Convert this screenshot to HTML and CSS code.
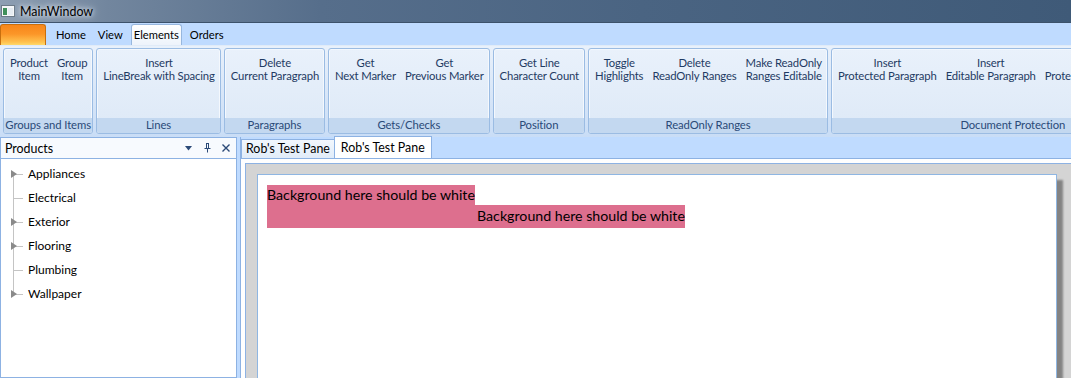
FILE: index.html
```html
<!DOCTYPE html>
<html lang="en">
<head>
  <meta charset="UTF-8">
  <title>MainWindow</title>
  <link rel="stylesheet" href="styles.css">
</head>
<body>
  <div class="window">
    <!-- Title bar -->
    <div class="titlebar">
      <svg class="app-icon" width="14" height="12" viewBox="0 0 14 12">
        <rect x="0.5" y="0.5" width="13" height="11" fill="#f4f6f8" stroke="#6c7a88"/>
        <rect x="2" y="3" width="4" height="7" fill="#3f8f5a"/>
        <rect x="7" y="3" width="5" height="7" fill="#e6ecf2"/>
      </svg>
      <span class="title">MainWindow</span>
    </div>

    <!-- Ribbon -->
    <div class="ribbon-tabs">
      <div class="app-button"></div>
      <div class="rtab">Home</div>
      <div class="rtab">View</div>
      <div class="rtab active">Elements</div>
      <div class="rtab">Orders</div>
    </div>
    <div class="ribbon-body">
      <div class="group">
        <div class="group-buttons">
          <div class="rbtn">Product<br>Item</div>
          <div class="rbtn">Group<br>Item</div>
        </div>
        <div class="group-label">Groups and Items</div>
      </div>
      <div class="group">
        <div class="group-buttons">
          <div class="rbtn">Insert<br>LineBreak with Spacing</div>
        </div>
        <div class="group-label">Lines</div>
      </div>
      <div class="group">
        <div class="group-buttons">
          <div class="rbtn">Delete<br>Current Paragraph</div>
        </div>
        <div class="group-label">Paragraphs</div>
      </div>
      <div class="group">
        <div class="group-buttons">
          <div class="rbtn">Get<br>Next Marker</div>
          <div class="rbtn">Get<br>Previous Marker</div>
        </div>
        <div class="group-label">Gets/Checks</div>
      </div>
      <div class="group">
        <div class="group-buttons">
          <div class="rbtn">Get Line<br>Character Count</div>
        </div>
        <div class="group-label">Position</div>
      </div>
      <div class="group">
        <div class="group-buttons">
          <div class="rbtn">Toggle<br>Highlights</div>
          <div class="rbtn">Delete<br>ReadOnly Ranges</div>
          <div class="rbtn">Make ReadOnly<br>Ranges Editable</div>
        </div>
        <div class="group-label">ReadOnly Ranges</div>
      </div>
      <div class="group">
        <div class="group-buttons">
          <div class="rbtn">Insert<br>Protected Paragraph</div>
          <div class="rbtn">Insert<br>Editable Paragraph</div>
          <div class="rbtn">Get<br>Protected Ranges</div>
          <div class="rbtn">Clear<br>Protection</div>
        </div>
        <div class="group-label">Document Protection</div>
      </div>
    </div>

    <!-- Dock area -->
    <div class="dock">
      <div class="pane">
        <div class="pane-header">
          <span class="pane-title">Products</span>
          <svg class="pane-icon" width="8" height="5" viewBox="0 0 8 5"><path d="M0 0h7L3.5 4.5z" fill="#2b4a78"/></svg>
          <svg class="pane-icon" width="7" height="10" viewBox="0 0 7 10"><path d="M2 0.5h3M2.5 0.5v5M4.5 0.5v5M0.5 5.5h6M3.5 5.5v4" stroke="#2b4a78" fill="none"/></svg>
          <svg class="pane-icon" width="8" height="8" viewBox="0 0 8 8"><path d="M0.5 0.5l7 7M7.5 0.5l-7 7" stroke="#2b4a78" stroke-width="1.4"/></svg>
        </div>
        <ul class="tree">
          <li class="has-children"><span class="expander"></span>Appliances</li>
          <li><span class="expander"></span>Electrical</li>
          <li class="has-children"><span class="expander"></span>Exterior</li>
          <li class="has-children"><span class="expander"></span>Flooring</li>
          <li><span class="expander"></span>Plumbing</li>
          <li class="has-children"><span class="expander"></span>Wallpaper</li>
        </ul>
      </div>
      <div class="splitter"></div>
      <div class="documents">
        <div class="doc-tabs">
          <div class="doc-tab">Rob's Test Pane</div>
          <div class="doc-tab active">Rob's Test Pane</div>
        </div>
        <div class="doc-body">
          <div class="viewer">
            <div class="page">
              <div class="highlight">
                <div class="hl-line first">Background here should be white</div>
                <div class="hl-line second">Background here should be white</div>
              </div>
            </div>
          </div>
        </div>
      </div>
    </div>
  </div>
</body>
</html>
```

FILE: styles.css
```css
body {
  margin: 0;
  font-family: Lato, "Noto Sans", sans-serif;
  font-size: 12px;
  overflow: hidden;
}
.window {
  width: 1071px;
  height: 378px;
  background-color: #bfdbff;
  overflow: hidden;
}

/* title bar */
.titlebar {
  height: 23px;
  display: flex;
  align-items: center;
  padding-left: 1px;
  background: linear-gradient(90deg, #8e9fb3 0, #72869e 10%, #566e8b 30%, #4a6482 60%, #3f5a78 100%);
  border-bottom: 1px solid #3c526b;
  box-sizing: border-box;
}
.app-icon {
  margin-right: 5px;
}
.title {
  font-size: 12.4px;
  color: #000;
  text-shadow: 0 0 8px #e8eef5, 0 0 4px #e8eef5;
}

/* ribbon tabs */
.ribbon-tabs {
  height: 22px;
  display: flex;
  align-items: flex-end;
  background-color: #bfdbff;
  font-size: 11.2px;
}
.app-button {
  width: 44px;
  height: 20px;
  margin-right: 5px;
  border: 1px solid #c86f0e;
  border-bottom: none;
  border-radius: 3px 3px 0 0;
  background: linear-gradient(#f7861a 0, #fb9628 45%, #ffc14e 85%, #ffd96a 100%);
}
.rtab {
  height: 20px;
  line-height: 20px;
  padding: 0 5px;
  margin-right: 2px;
  color: #000;
}
.rtab.active {
  padding: 0 2px;
  margin: 0 3px 0 1px;
  border: 1px solid #97b7de;
  border-bottom: none;
  border-radius: 3px 3px 0 0;
  background: linear-gradient(#ffffff, #edf3fb);
}

/* ribbon body */
.ribbon-body {
  height: 92px;
  box-sizing: border-box;
  padding: 2px 0 0 3px;
  display: flex;
  gap: 3px;
  background: linear-gradient(#e9f1fb, #c9ddf6);
  border-top: 1px solid #e0ebf8;
}
.group {
  flex-shrink: 0;
  height: 86px;
  display: flex;
  flex-direction: column;
  border: 1px solid #9bbce3;
  border-radius: 3px;
  background: linear-gradient(#e9f1fb, #dde9f7);
  box-shadow: inset 0 0 0 1px #f4f8fd;
  box-sizing: border-box;
}
.group-buttons {
  flex: 1;
  display: flex;
  gap: 9px;
  padding: 8px 5px 0 6px;
}
.rbtn {
  text-align: center;
  font-size: 11.3px;
  letter-spacing: -0.15px;
  line-height: 12.5px;
  color: #1f3b63;
  white-space: nowrap;
}
.group-label {
  height: 15px;
  line-height: 14px;
  font-size: 11.3px;
  letter-spacing: -0.1px;
  text-align: center;
  color: #2a4a78;
  background-color: #c3d8f0;
  border-radius: 0 0 2px 2px;
}

/* dock area */
.dock {
  display: flex;
  height: 241px;
}
.pane {
  width: 237px;
  flex-shrink: 0;
  border: 1px solid #8db2e3;
  box-sizing: border-box;
  background-color: #fff;
}
.pane-header {
  height: 21px;
  display: flex;
  align-items: center;
  padding: 0 6px 0 4px;
  border-bottom: 1px solid #8db2e3;
  background-color: #f7fafe;
  box-sizing: border-box;
  font-size: 12.4px;
}
.pane-title {
  flex: 1;
  color: #000;
}
.pane-icon {
  margin-left: 11px;
}
.tree {
  position: relative;
  list-style: none;
  margin: 3px 0 0;
  padding: 0;
}
.tree::before {
  content: "";
  position: absolute;
  left: 12px;
  top: 12px;
  bottom: 12px;
  border-left: 1px solid #c4c4c4;
}
.tree li {
  position: relative;
  height: 24px;
  line-height: 24px;
  padding-left: 27px;
  color: #000;
}
.tree li::before {
  content: "";
  position: absolute;
  left: 13px;
  top: 12px;
  width: 9px;
  border-top: 1px solid #c4c4c4;
}
.expander {
  display: none;
}
.tree li.has-children .expander {
  display: block;
  position: absolute;
  left: 10px;
  top: 8px;
  width: 0;
  height: 0;
  border-left: 6px solid #8a8a8a;
  border-top: 4px solid transparent;
  border-bottom: 4px solid transparent;
}
.splitter {
  width: 3px;
  flex-shrink: 0;
  background-color: #bfdbff;
}
.documents {
  flex: 1;
  display: flex;
  flex-direction: column;
  border-left: 1px solid #8db2e3;
  font-size: 12.4px;
}
.doc-tabs {
  height: 22px;
  display: flex;
  align-items: flex-end;
  border-bottom: 1px solid #8db2e3;
  box-sizing: border-box;
  background-color: #bfdbff;
}
.doc-tab {
  height: 19px;
  line-height: 18px;
  padding: 0 4px;
  border: 1px solid #8db2e3;
  border-bottom: none;
  border-right: none;
  background: linear-gradient(#f2f7fd, #e1ecf9);
  box-sizing: border-box;
  color: #000;
}
.doc-tab.active {
  height: 22px;
  line-height: 21px;
  padding: 0 6px;
  border-right: 1px solid #8db2e3;
  background: #fff;
}
.doc-body {
  flex: 1;
  padding: 4px 0 0 4px;
  background-color: #fff;
}
.viewer {
  height: 100%;
  border: 1px solid #8db2e3;
  border-right: none;
  background-color: #d4d4d4;
  padding: 10px 0 0 11px;
  box-sizing: border-box;
}
.page {
  width: 800px;
  height: 300px;
  box-sizing: border-box;
  border: 1px solid #8fb6e2;
  background-color: #fff;
  padding: 10px 9px;
  box-shadow: 6px 6px 2px rgba(0, 0, 0, 0.38);
}
.highlight {
  display: inline-block;
  font-size: 14.2px;
  color: #000;
}
.hl-line {
  background-color: #dd6f8e;
}
.hl-line.first {
  width: fit-content;
  height: 20px;
  line-height: 20px;
}
.hl-line.second {
  height: 23px;
  line-height: 22px;
  text-align: right;
  padding-left: 210px;
}
```
